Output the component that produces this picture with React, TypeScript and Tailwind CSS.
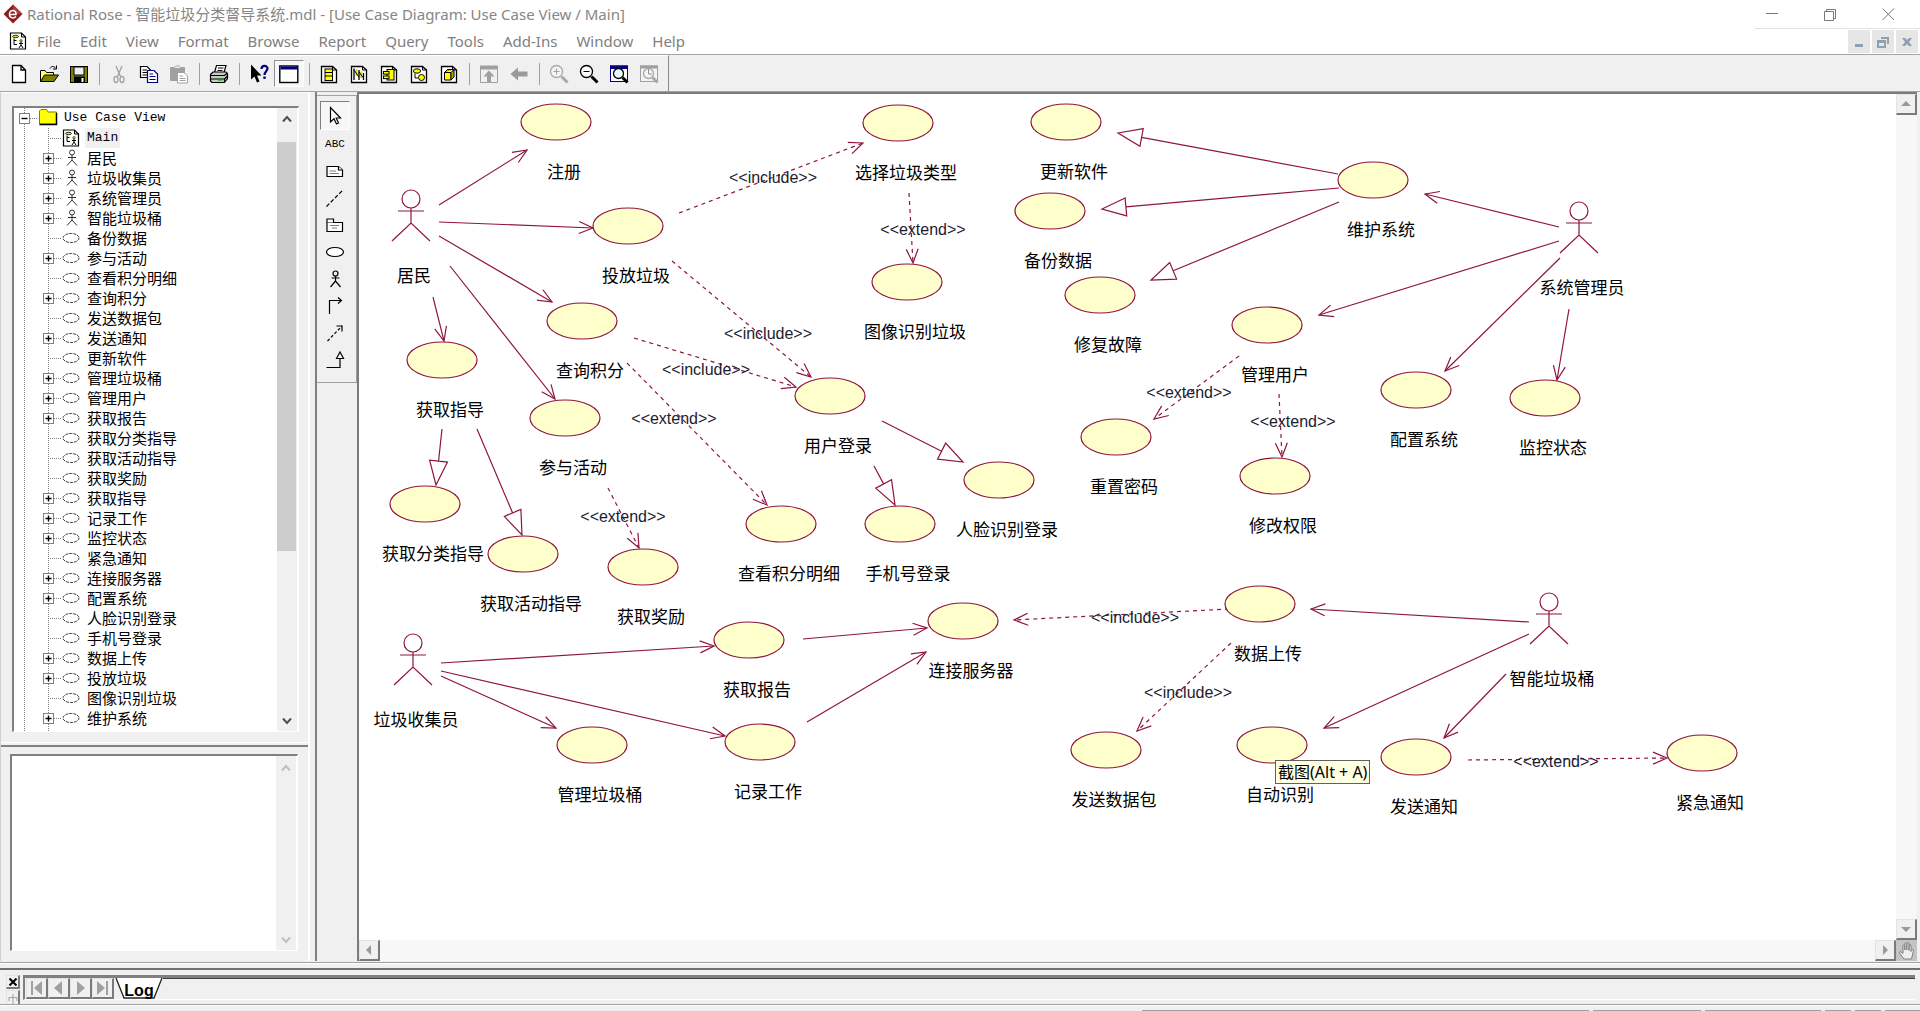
import React from "react";

const UI_FONT = "font-['Noto_Sans','Noto_Sans_CJK_SC',sans-serif]";
const RAISED =
  "border-t border-l border-b-2 border-r-2 border-t-[#e3e3e3] border-l-[#e3e3e3] border-b-[#7a7a7a] border-r-[#7a7a7a] bg-[#f0f0f0]";

const MENUS = ["File", "Edit", "View", "Format", "Browse", "Report", "Query", "Tools", "Add-Ins", "Window", "Help"];

/* ---------- toolbar icons, 20 x 20 ---------- */

const Page = ({ children, dim }: { children?: React.ReactNode; dim?: boolean }) => (
  <g>
    <path d="M2.5 2.5H13.5L17.5 6V18.5H2.5Z" fill="#fff" stroke={dim ? "#a0a0a0" : "#000"} strokeWidth="1.3" />
    <path d="M13.5 2.5V6H17.5" fill="none" stroke={dim ? "#a0a0a0" : "#000"} />
    {children}
  </g>
);

const Lens = ({ x, y, r, color, fill }: { x: number; y: number; r: number; color: string; fill: string }) => (
  <g>
    <circle cx={x} cy={y} r={r} fill={fill} stroke={color} strokeWidth="1.3" />
    <path d={`M${x + r - 1} ${y + r - 1}L18.5 18.5`} stroke={color} strokeWidth="3" />
  </g>
);

const ICONS: Record<string, React.ReactNode> = {
  New: <path d="M3.5 1.5H12L16.5 6V18.5H3.5ZM12 1.5V6H16.5" fill="#fff" stroke="#000" strokeWidth="1.3" />,
  Open: (
    <g stroke="#000">
      <path d="M1.5 17.5V6.5H6L7.5 8.5H14.5V11" fill="#ffff66" />
      <path d="M1.5 17.5L5.5 11H19.5L15 17.5Z" fill="#808000" />
      <path d="M11 4.5C12.5 1.8 15 1.8 17 4.5M17.5 1.5V5H14" fill="none" />
    </g>
  ),
  Save: (
    <g>
      <rect x="1.5" y="2.5" width="17" height="16" fill="#808000" stroke="#000" />
      <rect x="5" y="3" width="10" height="8" fill="#efefef" stroke="#000" />
      <rect x="5" y="12.5" width="11" height="6" fill="#000" />
      <rect x="12.5" y="14" width="2" height="4" fill="#fff" />
    </g>
  ),
  Cut: (
    <g fill="none" stroke="#a0a0a0" strokeWidth="1.3">
      <path d="M7 2L11.5 12.5M13 2L8.5 12.5" />
      <ellipse cx="7" cy="15.5" rx="2" ry="3" />
      <ellipse cx="13" cy="15.5" rx="2" ry="3" />
    </g>
  ),
  Copy: (
    <g strokeWidth="1.2">
      <path d="M1.5 2.5H8L11.5 6V13.5H1.5Z" fill="#fff" stroke="#000" />
      <path d="M3.5 6H8M3.5 8.5H9M3.5 11H9" stroke="#000" />
      <path d="M8.5 6.5H15L18.5 10V18.5H8.5Z" fill="#fff" stroke="#000080" />
      <path d="M10.5 10H14M10.5 12.5H16.5M10.5 15.5H16.5" stroke="#000080" />
    </g>
  ),
  Paste: (
    <g>
      <rect x="1" y="3" width="15" height="14" rx="1" fill="#a0a0a0" />
      <path d="M5 4.5C5 1 12 1 12 4.5Z" fill="#f0f0f0" stroke="#a0a0a0" />
      <path d="M8.5 8.5H15L18.5 12V19H8.5Z" fill="#fff" stroke="#a0a0a0" />
      <path d="M10.5 12H14M10.5 14.5H16.5M10.5 16.5H16.5" stroke="#a0a0a0" />
    </g>
  ),
  Print: (
    <g stroke="#000" strokeWidth="1.2">
      <path d="M5.5 8.5L7.5 1.5H17L15 8.5Z" fill="#fff" />
      <path d="M9 4H14.5M8.5 6.5H13.5" />
      <path d="M1.5 10.5L4 8H17L18.5 10V14.5L15.5 18.5H3L1.5 17Z" fill="#c8c8c8" />
      <path d="M1.5 11.5H15.5L18.5 9M2 15H15.5V18.5M15.5 15L18.5 12" fill="none" />
      <path d="M9 15.5H13" stroke="#00a000" strokeWidth="2" />
    </g>
  ),
  "Context Help": (
    <g>
      <path d="M2 0.5V15.5L5.5 12.5L8 18.5L10.5 17.5L8 11.5H12.5Z" fill="#000" />
      <path d="M12.5 5C12.5 1 18.5 1 18.5 4.5C18.5 7 15.5 7.5 15.5 11" fill="none" stroke="#000080" strokeWidth="2.2" />
      <rect x="14.3" y="12.5" width="2.4" height="2.4" fill="#000080" />
    </g>
  ),
  "View Documentation": (
    <g>
      <rect x="0.8" y="2" width="18" height="16.5" fill="#fff" stroke="#000" strokeWidth="1.4" />
      <rect x="1.5" y="2.5" width="16.6" height="3" fill="#000080" />
    </g>
  ),
  "Browse Class Diagram": (
    <Page>
      <rect x="6" y="5" width="7.5" height="11.5" fill="#ffff00" stroke="#000" />
      <path d="M6 8.5H13.5M6 12H13.5" stroke="#000" />
    </Page>
  ),
  "Browse Interaction Diagram": (
    <Page>
      <path d="M5 4.5V16M10 6V16M14.5 9V16" stroke="#000" strokeWidth="1.3" />
      <path d="M7.5 5V12M12.2 7.5V14" stroke="#d8d800" strokeWidth="2" />
      <path d="M5 6L10 13M10 8L14.5 14" stroke="#000" />
    </Page>
  ),
  "Browse Component Diagram": (
    <Page>
      <rect x="8" y="5.5" width="7" height="10.5" fill="#ffff00" stroke="#000" />
      <rect x="4.5" y="7.5" width="5.5" height="2.6" fill="#ffff00" stroke="#000" />
      <rect x="4.5" y="12" width="5.5" height="2.6" fill="#ffff00" stroke="#000" />
    </Page>
  ),
  "Browse State Machine Diagram": (
    <Page>
      <ellipse cx="8" cy="7" rx="3.6" ry="2.2" fill="#ffff00" stroke="#000" />
      <circle cx="12.5" cy="13.5" r="3" fill="#ffff00" stroke="#000" />
      <path d="M6 9.5V14H9" stroke="#000" fill="none" />
    </Page>
  ),
  "Browse Deployment Diagram": (
    <Page>
      <path d="M5.5 8.5H12V16H5.5Z" fill="#ffff00" stroke="#000" />
      <path d="M5.5 8.5L8.5 5.5H15V13L12 16V8.5L15 5.5M12 8.5H5.5" fill="#b0b000" stroke="#000" />
    </Page>
  ),
  "Browse Parent": (
    <g fill="#a0a0a0">
      <path d="M1 1.5H19V5.5H1Z" />
      <path d="M1.5 5V18.5H18.5V5" fill="none" stroke="#a0a0a0" />
      <path d="M10 6.5L15.5 12.5H12V18H8V12.5H4.5Z" />
    </g>
  ),
  "Browse Previous Diagram": <path d="M1.5 10L9 3.5V7.5H18.5V12.5H9V16.5Z" fill="#9a9a9a" />,
  "Zoom In": (
    <g>
      <Lens x={7.5} y={7.5} r={6} color="#a8a8a8" fill="#f4f4f4" />
      <path d="M4.5 7.5H10.5M7.5 4.5V10.5" stroke="#a0a0a0" />
    </g>
  ),
  "Zoom Out": (
    <g>
      <Lens x={7.5} y={7.5} r={6} color="#000" fill="#fff" />
      <path d="M4.5 7.5H10.5" stroke="#000" />
    </g>
  ),
  "Fit in Window": (
    <g>
      <rect x="1.5" y="2" width="17" height="15.5" fill="#fff" stroke="#000080" />
      <rect x="1" y="1.5" width="18" height="3.5" fill="#000080" />
      <Lens x={9.5} y={9.5} r={5} color="#000" fill="#eaffff" />
    </g>
  ),
  "Undo Fit in Window": (
    <g>
      <rect x="1.5" y="2" width="17" height="15.5" fill="#f4f4f4" stroke="#a0a0a0" />
      <rect x="1" y="1.5" width="18" height="3" fill="#a0a0a0" />
      <Lens x={9.5} y={9.5} r={5} color="#a8a8a8" fill="#f4f4f4" />
      <path d="M9.5 5V10H13" stroke="#909090" fill="none" />
    </g>
  ),
};

const TOOLBAR: (string | null)[] = [
  "New", "Open", "Save", null,
  "Cut", "Copy", "Paste", null,
  "Print", null,
  "Context Help", "View Documentation", null,
  "Browse Class Diagram", "Browse Interaction Diagram", "Browse Component Diagram",
  "Browse State Machine Diagram", "Browse Deployment Diagram", null,
  "Browse Parent", "Browse Previous Diagram", null,
  "Zoom In", "Zoom Out", "Fit in Window", "Undo Fit in Window",
];

/* ---------- toolbox icons, 22 x 22 ---------- */

const TOOLS: [string, React.ReactNode][] = [
  ["Selection Tool", <path d="M6.5 2.5V17L10 13.8L12.5 19L14.5 18L12.2 13H16.5Z" fill="#fff" stroke="#000" strokeWidth="1.2" />],
  ["Text Box", null],
  ["Note", <g fill="#fff" stroke="#000" strokeWidth="1.2"><path d="M3 6.5H14.5L18.5 10V16.5H3Z" /><path d="M14.5 6.5V10H18.5" /><path d="M5.5 11H12M5.5 13.5H15" stroke="#808080" /></g>],
  ["Anchor Note to Item", <path d="M2.5 19.5L19.5 2.5" stroke="#000" strokeWidth="1.2" strokeDasharray="4 2" />],
  ["Package", <g fill="#fff" stroke="#000" strokeWidth="1.2"><path d="M3 8.5H18.5V17.5H3Z" /><path d="M3 8.5V5H9.5V8.5" /><path d="M6 11.5H15M8 14H13" stroke="#808080" /></g>],
  ["Use Case", <ellipse cx="11" cy="11" rx="8.5" ry="4.5" fill="#fff" stroke="#000" strokeWidth="1.2" />],
  ["Actor", <g fill="none" stroke="#000" strokeWidth="1.2"><circle cx="11.5" cy="5.5" r="2.5" /><path d="M11.5 8V13M7.5 10H15.5M6.5 19L11.5 13L16.5 19" /></g>],
  ["Unidirectional Association", <path d="M5.5 19V5.5H17.5M14 2.5L17.5 5.5L14 8.5" fill="none" stroke="#000" strokeWidth="1.2" />],
  ["Dependency or Instantiates", <g fill="none" stroke="#000" strokeWidth="1.2"><path d="M3.5 19L18 4" strokeDasharray="3 2" /><path d="M12.5 4H18V9.5" /></g>],
  ["Generalization", <g fill="#fff" stroke="#000" strokeWidth="1.2"><path d="M2.5 18.5H16V9" fill="none" /><path d="M12.5 9.5L16 3L19.5 9.5Z" /></g>],
];

/* ---------- browser tree ---------- */

type Kind = "actor" | "case";
const TREE: [string, Kind, boolean][] = [
  ["居民", "actor", true], ["垃圾收集员", "actor", true], ["系统管理员", "actor", true], ["智能垃圾桶", "actor", true],
  ["备份数据", "case", false], ["参与活动", "case", true], ["查看积分明细", "case", false], ["查询积分", "case", true],
  ["发送数据包", "case", false], ["发送通知", "case", true], ["更新软件", "case", false], ["管理垃圾桶", "case", true],
  ["管理用户", "case", true], ["获取报告", "case", true], ["获取分类指导", "case", false], ["获取活动指导", "case", false],
  ["获取奖励", "case", false], ["获取指导", "case", true], ["记录工作", "case", true], ["监控状态", "case", true],
  ["紧急通知", "case", false], ["连接服务器", "case", true], ["配置系统", "case", true], ["人脸识别登录", "case", false],
  ["手机号登录", "case", false], ["数据上传", "case", true], ["投放垃圾", "case", true], ["图像识别垃圾", "case", false],
  ["维护系统", "case", true], ["修复故障", "case", false],
];

const DOT = { stroke: "#808080", strokeDasharray: "1 1", fill: "none" };

const RootGuide = () => (
  <svg className="h-5 w-5 shrink-0" aria-hidden="true"><path d="M10.5 0V20" {...DOT} /></svg>
);

const Box = ({ cx, plus }: { cx: number; plus: boolean }) => (
  <g>
    <rect x={cx - 5} y="5.5" width="10" height="10" fill="#fff" stroke="#808080" />
    <path d={`M${cx - 3} 10.5H${cx + 3}` + (plus ? `M${cx} 7.5V13.5` : "")} stroke="#000" strokeWidth="1.4" />
  </g>
);

const Branch = ({ label, open }: { label: string; open: boolean }) =>
  open ? (
    <button aria-label={`Expand ${label}`} className="h-5 w-7 shrink-0">
      <svg className="block h-5 w-7"><path d="M14.5 0V20M14 10.5H28" {...DOT} /><Box cx={14.5} plus /></svg>
    </button>
  ) : (
    <svg className="h-5 w-7 shrink-0" aria-hidden="true"><path d="M14.5 0V20M14 10.5H28" {...DOT} /></svg>
  );

const DiagramIcon = ({ className }: { className: string }) => (
  <svg viewBox="0 0 18 18" className={className} aria-hidden="true">
    <path d="M1.5 1H12.5L16.5 5V17H1.5Z" fill="#fff" stroke="#000" strokeWidth="1.2" />
    <path d="M12.5 1V5H16.5" fill="none" stroke="#000" />
    <ellipse cx="6.5" cy="4.5" rx="3" ry="1.2" fill="#e8e000" stroke="#000" strokeWidth="0.8" />
    <path d="M5 6.5V12.5H8M5 8.5H7.5" stroke="#000" fill="none" />
    <path d="M12 10V13M10 11.5H14M10 16L12 13L14 16" stroke="#000" fill="none" />
    <circle cx="12" cy="8.8" r="1.2" fill="#e8e000" stroke="#000" strokeWidth="0.6" />
  </svg>
);

const KindIcon = ({ kind }: { kind: Kind }) => (
  <svg className="h-5 w-[18px] shrink-0" aria-hidden="true">
    {kind === "actor" ? (
      <g fill="none" stroke="#333">
        <circle cx="10" cy="4.5" r="2.5" />
        <path d="M10 7V12M6 9.5H14M5 17.5L10 12L15 17.5" />
      </g>
    ) : (
      <ellipse cx="9" cy="10" rx="8" ry="4.5" fill="#fff" stroke="#333" strokeDasharray="3 1" />
    )}
  </svg>
);

const Chevron = ({ up, dim }: { up?: boolean; dim?: boolean }) => (
  <svg viewBox="0 0 10 8" className="h-2 w-[10px]" aria-hidden="true">
    <path d={up ? "M1 6.5L5 2L9 6.5" : "M1 1.5L5 6L9 1.5"} fill="none" stroke={dim ? "#c0c0c0" : "#505050"} strokeWidth="2" />
  </svg>
);

/* ---------- diagram ---------- */

const CASES: [string, number, number][] = [
  ["注册", 556, 122], ["投放垃圾", 628, 226], ["查询积分", 582, 321], ["获取指导", 442, 360], ["参与活动", 565, 418],
  ["用户登录", 830, 396], ["选择垃圾类型", 898, 123], ["图像识别垃圾", 907, 282], ["更新软件", 1066, 122],
  ["备份数据", 1050, 211], ["修复故障", 1100, 295], ["维护系统", 1373, 180], ["管理用户", 1267, 325],
  ["重置密码", 1116, 437], ["修改权限", 1275, 476], ["人脸识别登录", 999, 480], ["手机号登录", 900, 524],
  ["获取分类指导", 425, 504], ["获取活动指导", 523, 554], ["获取奖励", 643, 567], ["查看积分明细", 781, 524],
  ["获取报告", 749, 640], ["管理垃圾桶", 592, 745], ["记录工作", 760, 742], ["连接服务器", 963, 621],
  ["数据上传", 1260, 604], ["发送数据包", 1106, 750], ["自动识别", 1272, 745], ["配置系统", 1416, 390],
  ["监控状态", 1545, 398], ["发送通知", 1416, 757], ["紧急通知", 1702, 753],
];

const ACTORS: [string, number, number][] = [
  ["居民", 411, 199], ["垃圾收集员", 413, 643], ["系统管理员", 1579, 211], ["智能垃圾桶", 1549, 602],
];

type Edge = [number, number, number, number];
const ASSOCIATIONS: Edge[] = [
  [439, 205, 527, 150], [439, 222, 593, 228], [439, 236, 552, 302], [450, 266, 555, 399], [433, 297, 444, 341],
  [1559, 227, 1425, 194], [1559, 241, 1319, 315], [1560, 258, 1445, 371], [1569, 309, 1557, 380],
  [441, 663, 714, 646], [441, 671, 725, 736], [441, 676, 556, 728], [803, 639, 927, 628], [807, 722, 926, 652],
  [1529, 622, 1311, 609], [1529, 634, 1324, 728], [1506, 674, 1444, 738],
];
const GENERALIZATIONS: Edge[] = [
  [442, 429, 436, 485], [477, 429, 522, 535], [882, 421, 963, 462], [874, 466, 895, 505],
  [1338, 174, 1118, 133], [1339, 188, 1102, 209], [1339, 202, 1151, 280],
];
const DEPENDENCIES: [...Edge, string, number, number][] = [
  [679, 213, 863, 143, "<<include>>", 773, 177], [672, 261, 811, 377, "<<include>>", 768, 333],
  [634, 338, 796, 387, "<<include>>", 706, 369], [627, 363, 767, 505, "<<extend>>", 674, 418],
  [608, 488, 639, 548, "<<extend>>", 623, 516], [909, 193, 913, 263, "<<extend>>", 923, 229],
  [1239, 356, 1154, 419, "<<extend>>", 1189, 392], [1279, 394, 1282, 457, "<<extend>>", 1293, 421],
  [1229, 609, 1014, 620, "<<include>>", 1135, 617], [1231, 643, 1137, 731, "<<include>>", 1188, 692],
  [1468, 760, 1667, 758, "<<extend>>", 1556, 761],
];

function corners([x1, y1, x2, y2]: Edge, length: number, half: number) {
  const d = Math.hypot(x2 - x1, y2 - y1);
  const ux = (x2 - x1) / d;
  const uy = (y2 - y1) / d;
  const bx = x2 - ux * length;
  const by = y2 - uy * length;
  return { bx, by, ax: bx - uy * half, ay: by + ux * half, cx: bx + uy * half, cy: by - ux * half };
}

const Arrow = ({ edge, dashed }: { edge: Edge; dashed?: boolean }) => {
  const k = corners(edge, 14, 6);
  const [x1, y1, x2, y2] = edge;
  return (
    <g>
      <path d={`M${x1} ${y1}L${x2} ${y2}`} strokeDasharray={dashed ? "4 4" : undefined} />
      <path d={`M${k.ax} ${k.ay}L${x2} ${y2}L${k.cx} ${k.cy}`} />
    </g>
  );
};

const Generalization = ({ edge }: { edge: Edge }) => {
  const k = corners(edge, 24, 9);
  const [x1, y1, x2, y2] = edge;
  return <path d={`M${x1} ${y1}L${k.bx} ${k.by}M${k.ax} ${k.ay}L${x2} ${y2}L${k.cx} ${k.cy}Z`} />;
};

/* The diagram's coordinates are window coordinates; the view starts at (359, 94). */
const Diagram = () => (
  <svg className="block h-full w-full" role="img" aria-label="Use Case View / Main">
    <g transform="translate(-359 -94)">
      <g fill="none" stroke="#8f1540" strokeWidth="1.2">
        {ASSOCIATIONS.map((e, i) => <Arrow key={i} edge={e} />)}
        {GENERALIZATIONS.map((e, i) => <Generalization key={i} edge={e} />)}
        {DEPENDENCIES.map(([a, b, c, d], i) => <Arrow key={i} edge={[a, b, c, d]} dashed />)}
        {CASES.map(([n, x, y]) => <ellipse key={n} cx={x} cy={y} rx="35" ry="18" fill="#ffffcc" />)}
        {ACTORS.map(([n, x, y]) => (
          <g key={n}>
            <circle cx={x} cy={y} r="9" fill="#fff" />
            <path d={`M${x} ${y + 9}V${y + 24}M${x - 13} ${y + 12}H${x + 13}M${x - 19} ${y + 42}L${x} ${y + 24}L${x + 19} ${y + 42}`} />
          </g>
        ))}
      </g>
      <g fill="#000" textAnchor="middle" className="font-['Noto_Sans_CJK_SC',sans-serif] text-[17px]">
        {CASES.map(([n, x, y]) => <text key={n} x={x + 8} y={y + 56}>{n}</text>)}
        {ACTORS.map(([n, x, y]) => <text key={n} x={x + 3} y={y + 83}>{n}</text>)}
      </g>
      <g fill="#1c1c30" textAnchor="middle" className="font-['Liberation_Sans',sans-serif] text-base">
        {DEPENDENCIES.map(([, , , , t, x, y], i) => <text key={i} x={x} y={y + 6}>{t}</text>)}
      </g>
    </g>
  </svg>
);

/* ---------- scroll bar buttons ---------- */

const TRIANGLES: Record<string, string> = {
  up: "M1 8L6 3L11 8Z",
  down: "M1 4L6 9L11 4Z",
  left: "M8 1L3 6L8 11Z",
  right: "M4 1L9 6L4 11Z",
};

const ScrollButton = ({ dir }: { dir: string }) => (
  <button aria-label={`Scroll ${dir}`} className={`flex h-[21px] w-[21px] shrink-0 items-center justify-center ${RAISED}`}>
    <svg viewBox="0 0 12 12" className="h-3 w-3"><path d={TRIANGLES[dir]} fill="#9a9a9a" /></svg>
  </button>
);

const LOG_BUTTONS: [string, string][] = [
  ["First tab", "M2 0H4V14H2ZM13 0L5 7L13 14Z"],
  ["Previous tab", "M11 0L3 7L11 14Z"],
  ["Next tab", "M4 0L12 7L4 14Z"],
  ["Last tab", "M2 0L10 7L2 14ZM11 0H13V14H11Z"],
];

export default function App() {
  return (
    <div className={`flex h-screen flex-col overflow-hidden bg-[#f0f0f0] text-black ${UI_FONT}`}>
      {/* title bar */}
      <header className="flex h-7 shrink-0 items-center bg-white pl-[3px]">
        <svg viewBox="0 0 20 20" className="h-5 w-5 shrink-0" aria-hidden="true">
          <path d="M10 0.5L19.5 10L10 19.5L0.5 10Z" fill="#8c1d1d" />
          <path d="M10 0.5L19.5 10H10Z" fill="#b03a3a" />
          <path d="M6.5 10.5H13C13.5 5.5 7 5 6.5 9.5C6 14 10.5 15 13 12.5" fill="none" stroke="#fff" strokeWidth="1.5" />
        </svg>
        <h1 className="ml-1 flex-1 whitespace-nowrap text-[15px] leading-5 text-[#868686]">
          Rational Rose - 智能垃圾分类督导系统.mdl - [Use Case Diagram: Use Case View / Main]
        </h1>
        <div className="flex h-full shrink-0 pr-[3px]">
          {[
            ["Minimize", "M2 7.5H14"],
            ["Restore", "M2.5 5.5H11.5V14.5H2.5ZM4.5 5.5V3.5H13.5V12.5H11.5"],
            ["Close", "M2.5 2.5L14 14M14 2.5L2.5 14"],
          ].map(([name, d]) => (
            <button key={name} aria-label={name} className="flex w-[58px] items-center justify-center">
              <svg viewBox="0 0 16 16" className="h-4 w-4"><path d={d} fill="none" stroke="#777" /></svg>
            </button>
          ))}
        </div>
      </header>

      {/* menu bar */}
      <div className="flex h-[26px] shrink-0 items-center bg-white">
        <DiagramIcon className="ml-[9px] h-[18px] w-[18px] shrink-0" />
        <nav className="ml-px flex flex-1 gap-px" aria-label="Main menu">
          {MENUS.map((m) => (
            <button key={m} className="px-[9px] text-[15px] leading-6 text-[#808080]">{m}</button>
          ))}
        </nav>
        <div className="flex h-full w-[165px] shrink-0 justify-end gap-[2px] border-t border-[#e0e0e0] pr-[2px] pt-px">
          {[
            ["Minimize diagram", "M4 10H12V13H4Z"],
            ["Restore diagram", "M6 3H14V10H12V5H6ZM2 6H11V14H2ZM4 9V12H9V9Z"],
            ["Close diagram", "M3 4H6L8 6L10 4H13L10 8L13 12H10L8 10L6 12H3L6 8Z"],
          ].map(([name, d]) => (
            <button key={name} aria-label={name} className="flex h-[23px] w-[22px] items-center justify-center bg-[#e6e6e6]">
              <svg viewBox="0 0 16 16" className="h-4 w-4"><path d={d} fill="#8fa0b2" fillRule="evenodd" /></svg>
            </button>
          ))}
        </div>
      </div>

      {/* toolbar */}
      <div className="flex h-[38px] shrink-0 border-y border-[#a3a3a3]">
        <div role="toolbar" aria-label="Standard" className="flex items-center border-r border-t border-r-[#8a8a8a] border-t-white pl-1 pr-1">
          {TOOLBAR.map((name, i) =>
            name === null ? (
              <span key={i} className="flex h-[22px] w-[10px] justify-center"><span className="w-px bg-[#a0a0a0]" /></span>
            ) : (
              <button
                key={name}
                aria-label={name}
                className={
                  name === "View Documentation"
                    ? "flex h-[27px] w-[30px] items-center justify-center border border-b-white border-l-[#909090] border-r-white border-t-[#909090] bg-[#f7f7f7]"
                    : "flex h-[27px] w-[30px] items-center justify-center"
                }
              >
                <svg viewBox="0 0 20 20" className="h-5 w-5">{ICONS[name]}</svg>
              </button>
            )
          )}
        </div>
      </div>

      <main className="flex min-h-0 flex-1 pb-[1px]">
        {/* browser and documentation panes */}
        <aside className="flex w-[310px] shrink-0 flex-col border-l border-r-2 border-t border-l-[#d0d0d0] border-r-white border-t-white pt-[13px]">
          <div className="ml-[11px] mr-[9px] flex min-h-0 flex-1 border-b border-l-2 border-r border-t-2 border-b-white border-l-[#808080] border-r-white border-t-[#808080] bg-white">
            <ul role="tree" aria-label="Browser" className="min-h-0 flex-1 overflow-hidden text-[15px] leading-5">
              <li className="flex h-5 items-center">
                <button aria-label="Collapse Use Case View" className="h-5 w-6 shrink-0">
                  <svg className="block h-5 w-6"><path d="M10.5 0V20M10 10.5H24" {...DOT} /><Box cx={10.5} plus={false} /></svg>
                </button>
                <svg className="h-5 w-5 shrink-0" aria-hidden="true">
                  <path d="M1.5 5V3L3 1.5H8.5L10 4H18.5V16H1.5Z" fill="#ffff00" stroke="#808000" />
                  <path d="M1.5 16.5H18.5V5" fill="none" stroke="#000" strokeWidth="1.5" />
                </svg>
                <span className="ml-[6px] font-['Liberation_Mono',monospace] text-[13px] text-black">Use Case View</span>
              </li>
              <li className="flex h-5 items-center">
                <RootGuide />
                <Branch label="Main" open={false} />
                <DiagramIcon className="h-[18px] w-[18px] shrink-0" />
                <span className="ml-[5px] bg-[#f0f0f0] px-[2px] font-['Liberation_Mono',monospace] text-[13px]">Main</span>
              </li>
              {TREE.map(([label, kind, open]) => (
                <li key={label} className="flex h-5 items-center">
                  <RootGuide />
                  <Branch label={label} open={open} />
                  <KindIcon kind={kind} />
                  <span className="ml-[7px] whitespace-nowrap font-['Noto_Sans_CJK_SC',sans-serif]">{label}</span>
                </li>
              ))}
            </ul>
            <div className="mr-px flex w-5 shrink-0 flex-col bg-[#f0f0f0]">
              <button aria-label="Scroll tree up" className="flex h-[34px] items-center justify-center pb-3"><Chevron up /></button>
              <div className="flex flex-1 flex-col">
                <div className="mr-px grow-[410] bg-[#cdcdcd]" />
                <div className="grow-[160]" />
              </div>
              <button aria-label="Scroll tree down" className="flex h-5 items-center justify-center"><Chevron /></button>
            </div>
          </div>
          <div className="mt-[10px] h-[5px] shrink-0 border-b-2 border-t border-b-[#808080] border-t-white" />
          <div className="mb-[10px] ml-[9px] mr-[10px] mt-[7px] flex h-[197px] shrink-0 border-b border-l-2 border-r border-t-2 border-b-white border-l-[#808080] border-r-white border-t-[#808080] bg-white">
            <textarea aria-label="Documentation" className="min-w-0 flex-1 resize-none bg-white outline-none" />
            <div className="mr-px flex w-5 shrink-0 flex-col justify-between bg-[#f0f0f0]">
              <button aria-label="Scroll documentation up" className="flex h-6 items-center justify-center"><Chevron up dim /></button>
              <button aria-label="Scroll documentation down" className="flex h-5 items-center justify-center"><Chevron dim /></button>
            </div>
          </div>
        </aside>

        {/* toolbox */}
        <div className="ml-[5px] w-[42px] shrink-0 border-l-2 border-[#808080]">
          <div role="toolbar" aria-label="Toolbox" className="mt-[3px] flex h-[288px] flex-col items-center border-b border-r border-t border-[#a0a0a0] pb-[8px] pr-[3px] pt-[5px]">
            {TOOLS.map(([name, icon], i) => (
              <button
                key={name}
                aria-label={name}
                className={
                  i === 0
                    ? "flex w-[30px] flex-1 items-center justify-center border border-b-white border-l-[#808080] border-r-white border-t-[#808080] bg-[#f7f7f7]"
                    : "flex w-[30px] flex-1 items-center justify-center"
                }
              >
                {icon ? (
                  <svg viewBox="0 0 22 22" className="h-[22px] w-[22px]">{icon}</svg>
                ) : (
                  <span className="font-['Liberation_Mono',monospace] text-[11px] leading-4">ABC</span>
                )}
              </button>
            ))}
          </div>
        </div>

        {/* diagram window */}
        <section className="mr-[3px] flex min-w-0 flex-1 flex-col border-l-2 border-t-2 border-[#7c7c7c] bg-white">
          <div className="flex min-h-0 flex-1">
            <div className="relative min-w-0 flex-1 overflow-hidden bg-white">
              <Diagram />
              <div role="tooltip" className="absolute left-[916px] top-[666px] whitespace-nowrap border border-[#606060] bg-[#ffffe1] px-[2px] text-base leading-[22px] text-black">
                截图(Alt + A)
              </div>
            </div>
            <div className="flex w-[21px] shrink-0 flex-col justify-between bg-[#f7f7f7]">
              <ScrollButton dir="up" />
              <ScrollButton dir="down" />
            </div>
          </div>
          <div className="flex h-[21px] shrink-0 bg-[#f7f7f7]">
            <ScrollButton dir="left" />
            <div className="flex-1" />
            <ScrollButton dir="right" />
            <button aria-label="Pan" className="flex w-[21px] items-center justify-center bg-[#c4c4c4]">
              <svg viewBox="0 0 18 20" className="h-5 w-[18px]">
                <path
                  d="M6 18L1.5 12L2.5 10.5L5 12.5V4.5Q5.8 3.5 6.8 4.5V9V2.5Q7.8 1.5 8.8 2.5V9V2Q10 1 11 2V9.5V4Q12 3 13 4V10.5L14.5 8.5Q15.5 8 15.5 9.5L13.5 18Z"
                  fill="#eee" stroke="#808080"
                />
              </svg>
            </button>
          </div>
        </section>
      </main>

      {/* log pane */}
      <footer className="flex h-[43px] shrink-0 flex-col border-b border-t border-[#a0a0a0]">
        <div className="h-[7px] shrink-0 border-b-2 border-t border-b-[#707070] border-t-white" />
        <div className="flex min-h-0 flex-1 pt-[5px]">
          <div className="ml-[6px] flex w-[14px] shrink-0 flex-col gap-px overflow-hidden">
            <button aria-label="Close log" className={`flex h-[14px] shrink-0 items-center justify-center ${RAISED}`}>
              <svg viewBox="0 0 8 8" className="h-2 w-2"><path d="M0.5 0.5L7.5 7.5M7.5 0.5L0.5 7.5" stroke="#000" strokeWidth="2" /></svg>
            </button>
            <button aria-label="Pin log" className={`flex h-[18px] shrink-0 items-start justify-center ${RAISED}`}>
              <svg viewBox="0 0 10 12" className="mt-[2px] h-3 w-[10px]"><path d="M1 4.5H9M5 1V12M1 4.5V8M9 4.5V8" stroke="#a0a0a0" fill="none" /></svg>
            </button>
          </div>
          <div className="ml-[3px] mr-[5px] flex h-[25px] flex-1 items-start border-b border-l-2 border-t-[3px] border-b-white border-l-[#808080] border-t-[#808080] pl-px">
            {LOG_BUTTONS.map(([name, d]) => (
              <button key={name} aria-label={name} className={`flex h-[21px] w-[22px] shrink-0 items-center justify-center ${RAISED}`}>
                <svg viewBox="0 0 15 14" className="h-[14px] w-[15px]"><path d={d} fill="#a0a0a0" /></svg>
              </button>
            ))}
            <button className="relative ml-px h-[21px] w-12 shrink-0">
              <svg viewBox="0 0 48 21" className="absolute inset-0 h-[21px] w-12" aria-hidden="true">
                <path d="M1 0L9 20H39L47 0Z" fill="#fff" />
                <path d="M1 0L9 20H39L47 0" fill="none" stroke="#222" strokeWidth="1.3" />
              </svg>
              <span className="relative font-['Liberation_Sans',sans-serif] text-base font-bold leading-5">Log</span>
            </button>
            <div className="h-px flex-1 bg-[#404040]" />
          </div>
        </div>
      </footer>

      {/* status bar, only its top edge is inside the window */}
      <div className="flex h-[6px] shrink-0 items-end gap-1 border-t border-white">
        <div className="flex-1" />
        <div className="h-px w-[447px] bg-[#a0a0a0]" />
        <div className="h-px w-[108px] bg-[#a0a0a0]" />
        <div className="h-px w-[116px] bg-[#a0a0a0]" />
        <div className="h-px w-[26px] bg-[#a0a0a0]" />
        <div className="h-px w-[26px] bg-[#a0a0a0]" />
        <div className="h-px w-[35px] bg-[#a0a0a0]" />
      </div>
    </div>
  );
}
